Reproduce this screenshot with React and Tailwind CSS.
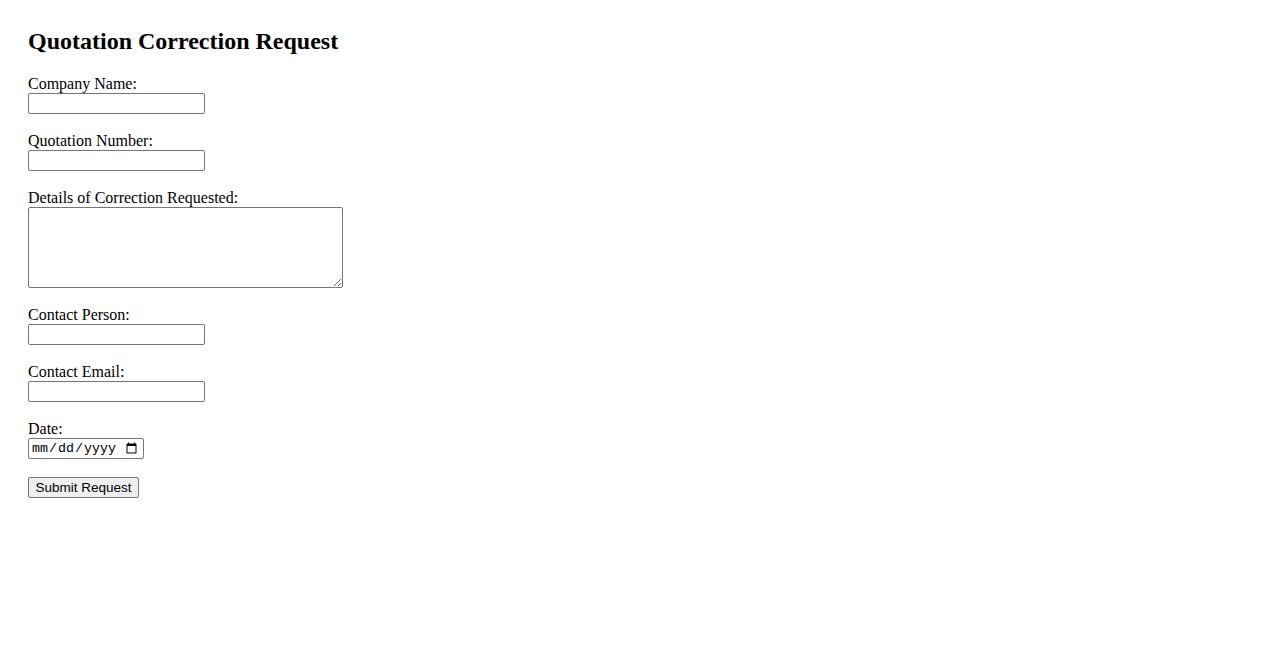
import React from "react";

function Field({ label, children, last }) {
  return (
    <div className={last ? "" : "mb-[18px]"}>
      <label className="block text-[16px] leading-[18px] text-black">{label}</label>
      {children}
    </div>
  );
}

const inputCls =
  "block w-[177px] h-[21px] border border-[#767676] rounded-[2px] bg-white px-[2px] py-[1px] text-[13.33px] font-['Liberation_Sans',Arial,sans-serif] outline-none";

export default function App() {
  return (
    <div className="min-h-[650px] bg-white px-[28px] pt-[28px] text-black font-['Liberation_Serif','Times_New_Roman',serif]">
      <h2 className="text-[24px] leading-[27px] font-bold mb-[20px]">Quotation Correction Request</h2>
      <form onSubmit={(e) => e.preventDefault()}>
        <Field label="Company Name:">
          <input type="text" className={inputCls} />
        </Field>
        <Field label="Quotation Number:">
          <input type="text" className={inputCls} />
        </Field>
        <Field label="Details of Correction Requested:">
          <textarea className="block w-[315px] h-[81px] border border-[#767676] rounded-[2px] bg-white px-[2px] py-[2px] text-[13.33px] font-['Liberation_Mono',monospace] outline-none resize" />
        </Field>
        <Field label="Contact Person:">
          <input type="text" className={inputCls} />
        </Field>
        <Field label="Contact Email:">
          <input type="email" className={inputCls} />
        </Field>
        <Field label="Date:">
          <input
            type="date"
            className="block w-[116px] h-[21px] border border-[#767676] rounded-[2px] bg-white pl-[2px] pr-[3px] py-[1px] text-[13.33px] leading-[15px] font-['Liberation_Mono',monospace] outline-none"
          />
        </Field>
        <button
          type="submit"
          className="block w-[111px] h-[21px] border border-[#767676] rounded-[2px] bg-[#efefef] px-[6px] py-[1px] text-center text-[13.5px] leading-[15px] text-black font-['Liberation_Sans',Arial,sans-serif]"
        >
          Submit Request
        </button>
      </form>
    </div>
  );
}
